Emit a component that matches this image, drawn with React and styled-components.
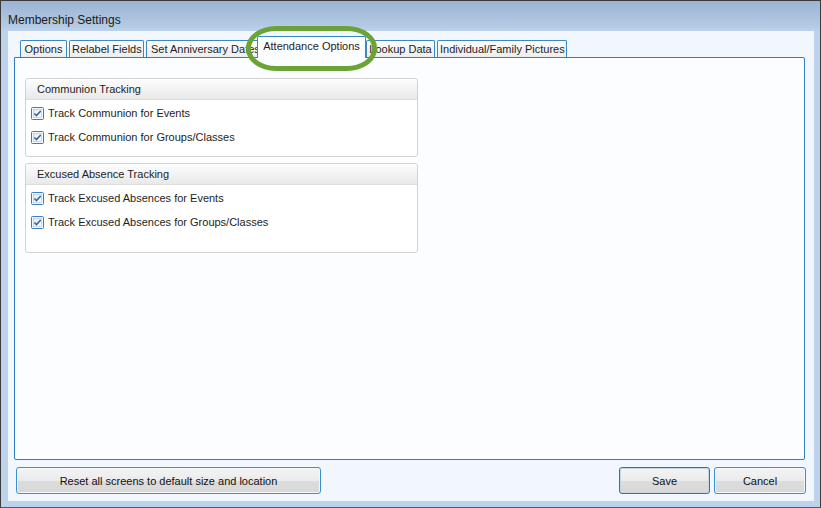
import React from 'react';
import styled, { createGlobalStyle } from 'styled-components';

const Global = createGlobalStyle`
  html, body {
    margin: 0;
    padding: 0;
    background: #ffffff;
  }
  body {
    font-family: "Liberation Sans", Arial, sans-serif;
    font-size: 11px;
    color: #1e1e1e;
  }
`;

const Window = styled.div`
  position: relative;
  width: 821px;
  height: 508px;
  box-sizing: border-box;
  border: 1px solid #3b3b3b;
  border-bottom-color: #1f6f88;
  background: #bcd3eb;
  display: flex;
  flex-direction: column;
  overflow: hidden;
`;

const TitleBar = styled.div`
  height: 30px;
  box-sizing: border-box;
  flex: none;
  display: flex;
  align-items: center;
  padding: 7px 0 0 7px;
  font-size: 12px;
  color: #1a1a1a;
  background: linear-gradient(#9ab4d2, #b3c9e3 80%, #bcd2ea);
`;

const Client = styled.div`
  flex: 1;
  margin: 0 6px 6px 7px;
  background: #f2f7fd;
  display: flex;
  flex-direction: column;
  padding: 5px 0 6px 0;
`;

const TabRow = styled.div`
  display: flex;
  align-items: flex-end;
  gap: 2px;
  padding-left: 12px;
  margin-bottom: -1px;
  position: relative;
  z-index: 1;
  height: 22px;
`;

const Tab = styled.div`
  box-sizing: border-box;
  flex: none;
  width: ${(p) => p.$w}px;
  height: ${(p) => (p.$active ? 22 : 17)}px;
  line-height: ${(p) => (p.$active ? 19 : 16)}px;
  margin: ${(p) => (p.$active ? '0 -2px 0 -4px' : '0 0 1px 0')};
  padding: 0 2px;
  border: 1px solid #3a87c6;
  border-bottom: none;
  border-radius: 2px 2px 0 0;
  background: ${(p) =>
    p.$active ? '#fcfdfe' : 'linear-gradient(#fbfbfb, #eceef0)'};
  text-align: ${(p) => (p.$clip ? 'left' : 'center')};
  padding-left: ${(p) => (p.$clip ? 4 : 2)}px;
  white-space: nowrap;
  overflow: hidden;
  position: relative;
  z-index: ${(p) => (p.$active ? 2 : 1)};
`;

const Panel = styled.div`
  box-sizing: border-box;
  height: 403px;
  margin: 0 9px 0 6px;
  border: 1px solid #2f80c2;
  border-radius: 0 2px 2px 2px;
  background: #fcfdfe;
  padding: 20px 0 0 10px;
  display: flex;
  flex-direction: column;
  gap: 6px;
`;

const Group = styled.div`
  box-sizing: border-box;
  width: 393px;
  height: ${(p) => p.$h}px;
  border: 1px solid #d3d3d3;
  border-radius: 3px;
  background: #ffffff;
  display: flex;
  flex-direction: column;
`;

const GroupHeader = styled.div`
  height: 20px;
  display: flex;
  align-items: center;
  padding-left: 11px;
  background: linear-gradient(#fdfdfd, #e9e9e9);
  border-bottom: 1px solid #dedede;
  border-radius: 3px 3px 0 0;
`;

const CheckList = styled.div`
  padding: 1px 0 0 5px;
  display: flex;
  flex-direction: column;
`;

const CheckRow = styled.label`
  height: 24px;
  display: flex;
  align-items: center;
  gap: 4px;
`;

const Box = styled.svg`
  width: 13px;
  height: 13px;
  flex: none;
`;

const Footer = styled.div`
  display: flex;
  align-items: center;
  gap: 4px;
  padding: 0 8px 0 8px;
  margin-top: 7px;
`;

const Button = styled.button`
  box-sizing: border-box;
  width: ${(p) => p.$w}px;
  height: 27px;
  margin-left: ${(p) => (p.$push ? 'auto' : '0')};
  font-family: "Liberation Sans", Arial, sans-serif;
  font-size: 11px;
  color: #111;
  border: 1px solid ${(p) => (p.$default ? '#3c6f9c' : '#3a8fcf')};
  border-radius: 3px;
  box-shadow: inset 0 0 0 1px ${(p) => (p.$default ? '#c8d6e4' : '#f6f9fc')};
  background: linear-gradient(#f4f4f4, #ebebeb 50%, #dcdcdc 51%, #d8d8d8);
  padding: 0;
`;

const Highlight = styled.div`
  position: absolute;
  left: 245px;
  top: 25px;
  width: 131px;
  height: 45px;
  box-sizing: border-box;
  border: 5px solid #6aa437;
  border-radius: 30px / 22px;
  pointer-events: none;
  z-index: 5;
`;

const tabs = [
  { label: 'Options', w: 47 },
  { label: 'Relabel Fields', w: 75 },
  { label: 'Set Anniversary Dates', w: 113, clip: true },
  { label: 'Attendance Options', w: 109, active: true },
  { label: 'Lookup Data', w: 69 },
  { label: 'Individual/Family Pictures', w: 130 },
];

const groups = [
  {
    title: 'Communion Tracking',
    h: 79,
    items: ['Track Communion for Events', 'Track Communion for Groups/Classes'],
  },
  {
    title: 'Excused Absence Tracking',
    h: 90,
    items: [
      'Track Excused Absences for Events',
      'Track Excused Absences for Groups/Classes',
    ],
  },
];

function CheckBox() {
  return (
    <Box viewBox="0 0 13 13">
      <defs>
        <linearGradient id="cbg" x1="0" y1="0" x2="1" y2="1">
          <stop offset="0" stopColor="#dfeaf5" />
          <stop offset="1" stopColor="#ffffff" />
        </linearGradient>
      </defs>
      <rect x="0.5" y="0.5" width="12" height="12" rx="1" fill="#f4f8fc" stroke="#3a7fbd" />
      <rect x="2.5" y="2.5" width="8" height="8" fill="url(#cbg)" stroke="#a9c4de" strokeWidth="0.6" />
      <path d="M3.4 6.4 L5.5 8.6 L9.7 3.9" fill="none" stroke="#2c64a0" strokeWidth="1.5" />
    </Box>
  );
}

export default function App() {
  return (
    <>
      <Global />
      <Window>
        <TitleBar>Membership Settings</TitleBar>
        <Client>
          <TabRow>
            {tabs.map((t) => (
              <Tab key={t.label} $w={t.w} $active={t.active} $clip={t.clip}>
                {t.label}
              </Tab>
            ))}
          </TabRow>
          <Panel>
            {groups.map((g) => (
              <Group key={g.title} $h={g.h}>
                <GroupHeader>{g.title}</GroupHeader>
                <CheckList>
                  {g.items.map((it) => (
                    <CheckRow key={it}>
                      <CheckBox />
                      {it}
                    </CheckRow>
                  ))}
                </CheckList>
              </Group>
            ))}
          </Panel>
          <Footer>
            <Button $w={305}>Reset all screens to default size and location</Button>
            <Button $w={91} $push $default>Save</Button>
            <Button $w={92}>Cancel</Button>
          </Footer>
        </Client>
        <Highlight />
      </Window>
    </>
  );
}
